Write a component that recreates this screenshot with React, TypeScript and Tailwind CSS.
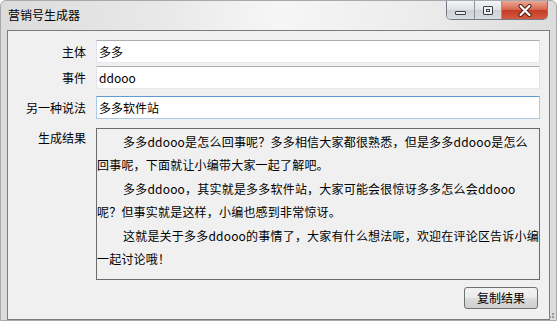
import React from 'react'

const FONT = "font-['Noto_Sans_CJK_SC','Microsoft_YaHei',sans-serif]"

// Win7 basic-theme caption buttons
function CaptionButtons() {
  return (
    <div className="flex h-[19px] self-start overflow-hidden rounded-b-[5px] border border-t-0 border-[#767b86]">
      <div className="flex w-[28px] items-end justify-center border-r border-[#8d929b] bg-[linear-gradient(#f4f5f6,#dfe1e4_50%,#cdd0d5_50%,#d9dce0)] pb-[4px]">
        <div className="h-[4px] w-[11px] rounded-[1px] border border-[#3c4048] bg-[#f0f0f0]" />
      </div>
      <div className="flex w-[27px] items-center justify-center border-r border-[#8d929b] bg-[linear-gradient(#f4f5f6,#dfe1e4_50%,#cdd0d5_50%,#d9dce0)] pt-[1px]">
        <div className="flex h-[9px] w-[10px] items-center justify-center rounded-[1px] border border-[#3c4048] bg-[#f0f0f0]">
          <div className="h-[3px] w-[4px] border border-[#3c4048]" />
        </div>
      </div>
      <div className="flex w-[45px] items-center justify-center bg-[linear-gradient(#e9a996,#d7624c_50%,#c43b25_50%,#d4593f)] pt-[1px]">
        <svg width="14" height="13" viewBox="0 0 14 13">
          <path d="M2.5 2 L11.5 11 M11.5 2 L2.5 11" stroke="#4a1a12" strokeWidth="4" strokeLinecap="round" />
          <path d="M2.5 2 L11.5 11 M11.5 2 L2.5 11" stroke="#ffffff" strokeWidth="2.2" strokeLinecap="round" />
        </svg>
      </div>
    </div>
  )
}

function Field({ label, value, focused }: { label: string; value: string; focused?: boolean }) {
  return (
    <>
      <div className="flex h-[23px] items-center justify-end text-[12px] text-black">{label}</div>
      <input
        readOnly
        value={value}
        className={
          focused
            ? 'h-[23px] w-full border border-[#a9cbe9] border-t-[#5f9ad0] bg-white px-[2px] text-[12px] text-black outline-none'
            : 'h-[23px] w-full border border-[#e2e3ea] border-t-[#abadb3] border-b-[#e3e9ef] bg-white px-[2px] text-[12px] text-black outline-none'
        }
      />
    </>
  )
}

export default function App() {
  return (
    <div
      className={`${FONT} relative flex h-[321px] w-[557px] flex-col overflow-hidden rounded-t-[6px] border border-[#a7a9ad] bg-[linear-gradient(90deg,#dcdcdc,#e9e9e9_30%,#f6f6f6_50%,#ececec_75%,#dcdcdc)]`}
    >
      {/* caption */}
      <div className="flex h-[29px] shrink-0 items-start justify-between pr-[8px]">
        <span className="mt-[5px] pl-[7px] text-[12px] leading-[18px] text-black">营销号生成器</span>
        <CaptionButtons />
      </div>

      {/* client area */}
      <div className="mx-[6px] flex flex-col border border-[#7d7d7d] bg-[#f0f0f0] pb-[10px] pr-[11px] pt-[9px]">
        <div className="grid grid-cols-[78px_1fr] gap-x-[10px] gap-y-[3px]">
          <Field label="主体" value="多多" />
          <Field label="事件" value="ddooo" />
          <div className="col-span-2 h-[1px]" />
          <Field label="另一种说法" value="多多软件站" focused />
          <div className="col-span-2 h-[3px]" />
          <div className="flex justify-end pt-[1px] text-[12px] leading-[18px] text-black">生成结果</div>
          <div className="h-[152px] border border-[#6b6b6b] bg-[#f0f0f0] pt-[1px] text-[12px] leading-[23px] tracking-[0.2px] text-black">
            <p className="whitespace-nowrap indent-[26px]">
              多多ddooo是怎么回事呢？多多相信大家都很熟悉，但是多多ddooo是怎么
              <br />
              回事呢，下面就让小编带大家一起了解吧。
            </p>
            <p className="mt-[1px] whitespace-nowrap indent-[26px]">
              多多ddooo，其实就是多多软件站，大家可能会很惊讶多多怎么会ddooo
              <br />
              呢？但事实就是这样，小编也感到非常惊讶。
            </p>
            <p className="mt-[1px] whitespace-nowrap indent-[26px]">
              这就是关于多多ddooo的事情了，大家有什么想法呢，欢迎在评论区告诉小编
              <br />
              一起讨论哦！
            </p>
          </div>
        </div>

        <div className="mt-[7px] flex justify-end">
          <button
            type="button"
            className="h-[22px] w-[74px] rounded-[3px] border border-[#707070] bg-[linear-gradient(#f2f2f2,#ebebeb_50%,#dddddd_50%,#cfcfcf)] text-[12px] text-black"
          >
            复制结果
          </button>
        </div>
      </div>

      {/* size grip */}
      <div className="absolute bottom-[2px] right-[2px] grid grid-cols-2 gap-[1px]">
        <span />
        <span className="h-[2px] w-[2px] bg-[#9a9a9a]" />
        <span className="h-[2px] w-[2px] bg-[#9a9a9a]" />
        <span className="h-[2px] w-[2px] bg-[#9a9a9a]" />
      </div>
    </div>
  )
}
